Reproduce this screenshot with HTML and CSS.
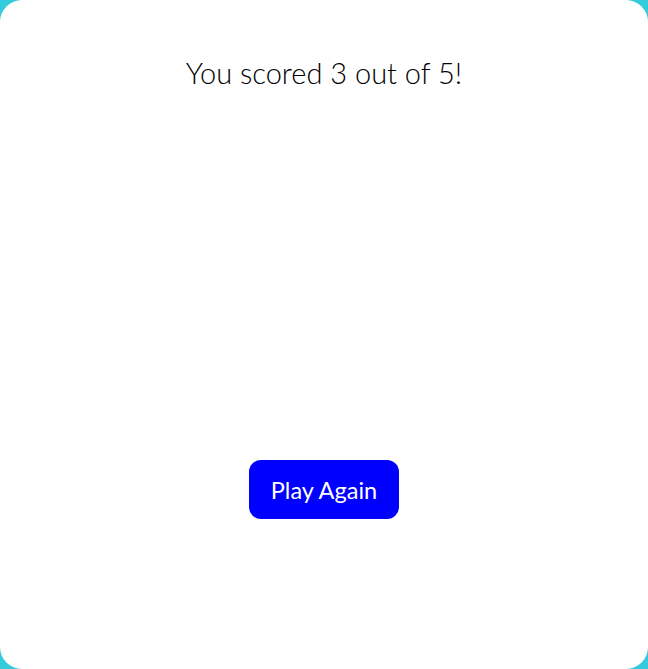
FILE: index.html
```html
<!DOCTYPE html>
<html>
<head>
<meta charset="utf-8">
<link rel="stylesheet" href="styles.css">
</head>
<body>
<div class="card">
  <h2 class="score">You scored 3 out of 5!</h2>
  <button class="play">Play Again</button>
</div>
</body>
</html>
```
FILE: styles.css
```css
html, body {
  margin: 0;
  padding: 0;
  height: 100%;
}
body {
  background: #34cbdc;
  font-family: Lato, "Open Sans", sans-serif;
}
.card {
  box-sizing: border-box;
  height: 669px;
  background: #fff;
  border-radius: 22px;
  display: flex;
  flex-direction: column;
  align-items: center;
  padding-top: 55px;
}
.score {
  margin: 0;
  font-size: 29px;
  font-weight: 300;
  color: #000;
  line-height: 36px;
}
.play {
  margin-top: 369px;
  width: 150px;
  height: 59px;
  border: none;
  border-radius: 12px;
  background: #0000ff;
  color: #fff;
  font-family: Lato, sans-serif;
  font-size: 23.5px;
  padding: 0;
}
```
